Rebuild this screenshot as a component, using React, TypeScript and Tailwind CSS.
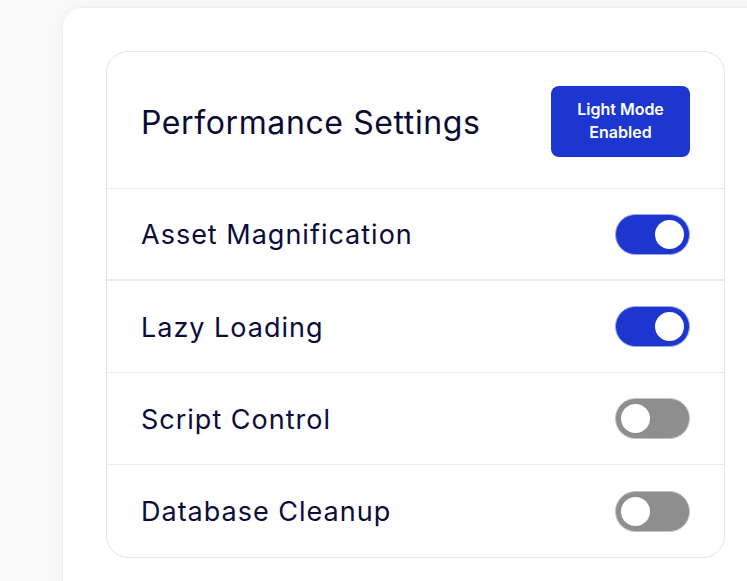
import React from "react";

function Toggle({ on }: { on: boolean }) {
  return (
    <div
      className={
        on
          ? "w-[75px] h-[41px] rounded-full bg-[#1d36d0] border border-[#9aa8f0] flex items-center justify-end px-[5px]"
          : "w-[75px] h-[41px] rounded-full bg-[#8e8e8e] border border-[#c4c4c4] flex items-center justify-start px-[5px]"
      }
    >
      <div className="w-[29px] h-[29px] rounded-full bg-white" />
    </div>
  );
}

const rows = [
  { label: "Asset Magnification", on: true },
  { label: "Lazy Loading", on: true },
  { label: "Script Control", on: false },
  { label: "Database Cleanup", on: false },
];

export default function App() {
  return (
    <div
      className="w-[747px] h-[581px] overflow-hidden bg-[#fafafa] pl-[62px] pt-[7px]"
      style={{ fontFamily: "Inter, 'Noto Sans', sans-serif" }}
    >
      <div className="w-[720px] h-[640px] bg-white rounded-[20px] border border-[#efefef] shadow-[0_0_24px_rgba(0,0,0,0.04)] pl-[43px] pt-[43px]">
        <div className="w-[619px] bg-white rounded-[22px] border border-[#e6e6ea] flex flex-col">
          <div className="h-[137px] border-b border-[#ebebef] flex items-center justify-between pl-[34px] pr-[34px]">
            <h1 className="text-[32px] font-normal text-[#0b0b35] tracking-[0.6px] pt-[5px]">
              Performance Settings
            </h1>
            <div className="w-[139px] h-[71px] mt-[2px] rounded-[8px] bg-[#1d36d0] text-white text-[16px] leading-[23px] font-semibold flex items-center justify-center text-center">
              Light Mode
              <br />
              Enabled
            </div>
          </div>
          {rows.map((r, i) => (
            <div
              key={r.label}
              className={
                i === 0
                  ? "h-[92px] border-b-2 border-[#e9e9f0] flex items-center justify-between pl-[34px] pr-[34px]"
                  : i === rows.length - 1
                  ? "h-[92px] flex items-center justify-between pl-[34px] pr-[34px]"
                  : "h-[92px] border-b border-[#ebebef] flex items-center justify-between pl-[34px] pr-[34px]"
              }
            >
              <span className="text-[27px] text-[#0c0c3a] tracking-[1px] pt-[3px]">{r.label}</span>
              <Toggle on={r.on} />
            </div>
          ))}
        </div>
      </div>
    </div>
  );
}
